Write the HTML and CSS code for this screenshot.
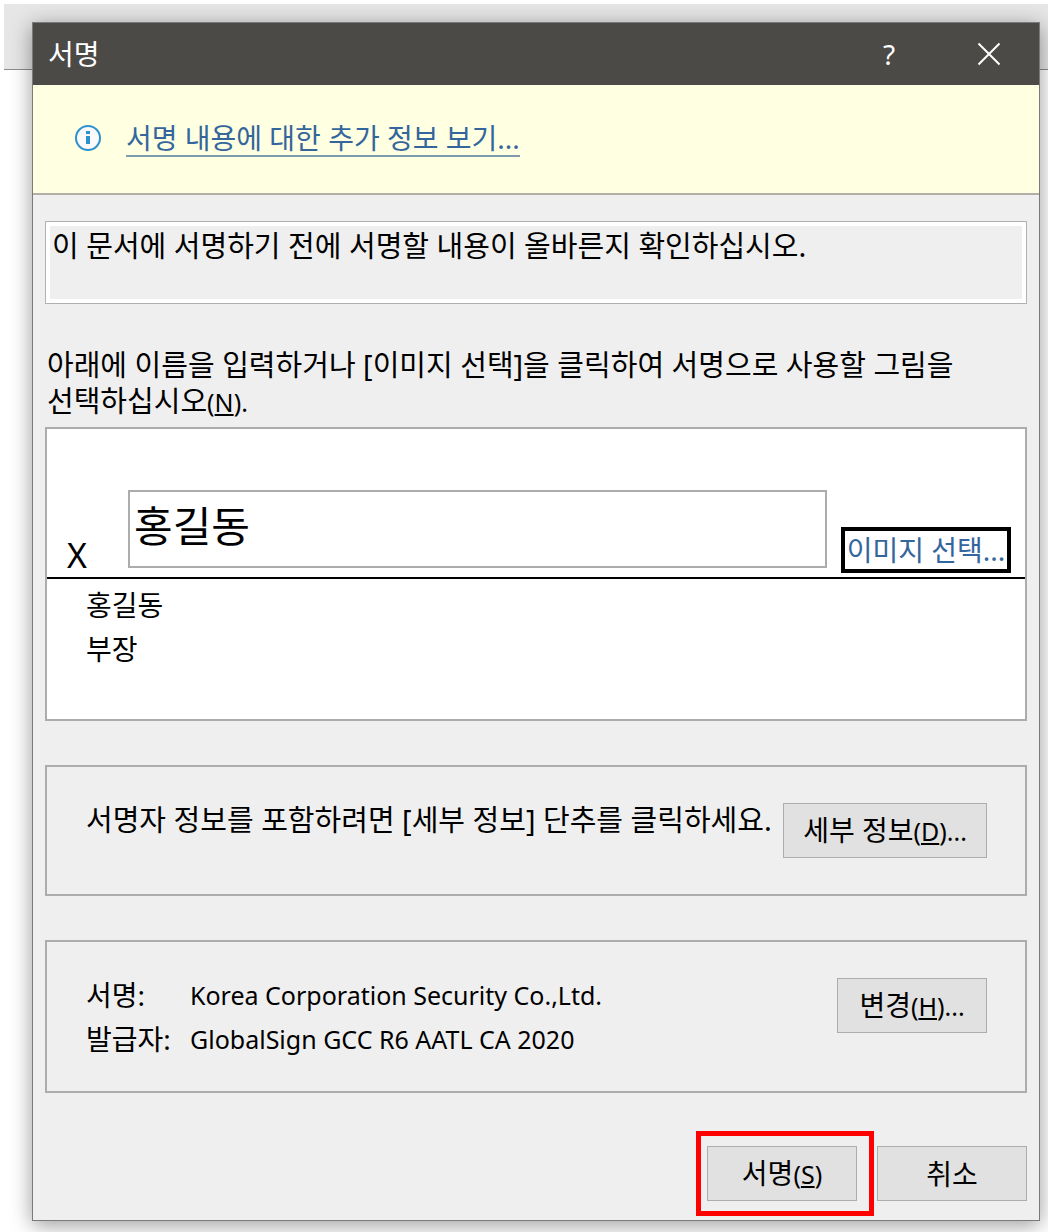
FILE: index.html
```
<!DOCTYPE html>
<html lang="ko">
<head>
<meta charset="UTF-8">
<meta name="viewport" content="width=device-width, initial-scale=1.0">
<title>서명</title>
<link rel="stylesheet" href="styles.css">
</head>
<body>

<div class="desktop">
  <div class="ribbon"></div>

  <main class="dialog">
    <!-- 제목 표시줄 -->
    <header class="titlebar">
      <h1>서명</h1>
      <button type="button" class="title-btn" aria-label="도움말">?</button>
      <button type="button" class="title-btn" aria-label="닫기">
        <svg width="24" height="24" viewBox="0 0 24 24" aria-hidden="true">
          <path d="M1.5 1.5 L22.5 22.5 M22.5 1.5 L1.5 22.5"/>
        </svg>
      </button>
    </header>

    <!-- 추가 정보 -->
    <div class="notice">
      <svg class="info-icon" width="28" height="28" viewBox="0 0 28 28" aria-hidden="true">
        <circle cx="14" cy="13" r="12"/>
        <rect x="12" y="6" width="4" height="3"/>
        <rect x="12" y="11" width="4" height="8"/>
      </svg>
      <a href="#" class="link">서명 내용에 대한 추가 정보 보기...</a>
    </div>

    <form class="content">
      <p class="message">이 문서에 서명하기 전에 서명할 내용이 올바른지 확인하십시오.</p>

      <label class="name-label" for="name">아래에 이름을 입력하거나 [이미지 선택]을 클릭하여 서명으로 사용할 그림을<br>선택하십시오<span class="key">(<u>N</u>).</span></label>

      <!-- 서명란 -->
      <div class="sign-box">
        <div class="sign-line">
          <span class="mark">X</span>
          <input type="text" id="name" value="홍길동">
          <button type="button" class="image-btn">이미지 선택...</button>
        </div>
        <div class="signer">
          <p>홍길동</p>
          <p>부장</p>
        </div>
      </div>

      <section class="panel details">
        <p>서명자 정보를 포함하려면 [세부 정보] 단추를 클릭하세요.</p>
        <button type="button" class="btn btn-wide">세부 정보<span class="key">(<u>D</u>)...</span></button>
      </section>

      <!-- 인증서 -->
      <section class="panel cert">
        <dl>
          <dt>서명:</dt>
          <dd>Korea Corporation Security Co.,Ltd.</dd>
          <dt>발급자:</dt>
          <dd>GlobalSign GCC R6 AATL CA 2020</dd>
        </dl>
        <button type="button" class="btn">변경<span class="key">(<u>H</u>)...</span></button>
      </section>

      <div class="actions">
        <div class="highlight">
          <button type="submit" class="btn">서명<span class="key">(<u>S</u>)</span></button>
        </div>
        <button type="button" class="btn">취소</button>
      </div>
    </form>
  </main>
</div>

</body>
</html>
```

FILE: styles.css
```
/* 기본 */
* {
  margin: 0;
  padding: 0;
  box-sizing: border-box;
}

body {
  font-family: "Noto Sans", "Noto Sans CJK KR", sans-serif;
  font-size: 28px;
  line-height: 36px;
  background: #fff;
  color: #000;
}

button, input {
  font: inherit;
  color: inherit;
}

/* 대화 상자 뒤의 창 */
.desktop {
  display: grid;
  min-height: 100vh;
  padding: 4px 0 0 4px;
  overflow: hidden;
}

.ribbon {
  grid-area: 1 / 1;
  height: 66px;
  background: #e6e6e6;
  border-bottom: 1px solid #8c8c8c;
}

.dialog {
  grid-area: 1 / 1;
  z-index: 1;
  display: flex;
  flex-direction: column;
  margin: 18px 8px 11px 28px;
  background: #efefef;
  border: 1px solid #7a7a7a;
  box-shadow: 0 4px 20px rgba(0,0,0,0.4);
}

/* 제목 표시줄 */
.titlebar {
  display: flex;
  align-items: center;
  height: 62px;
  padding-left: 15px;
  background: #4b4a47;
  color: #fff;
}

.titlebar h1 {
  flex: 1;
  font-size: 28px;
  font-weight: 400;
}

.title-btn {
  display: flex;
  align-items: center;
  justify-content: center;
  width: 100px;
  height: 62px;
  background: none;
  border: 0;
}

.title-btn path {
  fill: none;
  stroke: #fff;
  stroke-width: 2;
}

/* 알림 */
.notice {
  display: flex;
  align-items: center;
  gap: 24px;
  height: 110px;
  padding-left: 41px;
  background: #ffffe1;
  border-bottom: 2px solid #b0b0a6;
}

.info-icon circle {
  fill: #fafafa;
  stroke: #2b92cf;
  stroke-width: 2;
}

.info-icon rect {
  fill: #2b92cf;
}

.link {
  color: #33669c;
  line-height: 34px;
  text-decoration: none;
  border-bottom: 2px solid #7c9cae;
}

/* 본문 */
.content {
  display: flex;
  flex-direction: column;
  padding: 26px 12px 18px;
}

.message,
.name-label,
.details p {
  font-size: 29px;
}

.message {
  min-height: 83px;
  padding: 6px;
  border: 1px solid #b0b0b4;
  box-shadow: inset 0 0 0 4px #fff;
}

.name-label {
  margin: 43px 2px 7px;
}

.key {
  font-size: 25px;
}

/* 서명란 */
.sign-box {
  min-height: 294px;
  background: #fff;
  border: 2px solid #acacac;
}

.sign-line {
  display: flex;
  align-items: flex-end;
  height: 150px;
  padding: 0 14px 4px 20px;
  border-bottom: 2px solid #000;
}

.mark {
  width: 61px;
  font-size: 34px;
}

.sign-line input {
  flex: 1;
  min-width: 0;
  height: 78px;
  margin: 0 14px 5px 0;
  padding: 0 4px 12px;
  font-size: 42px;
  background: #fff;
  border: 2px solid #acacac;
  outline: 0;
}

.image-btn {
  width: 170px;
  height: 46px;
  background: #fff;
  border: 4px solid #000;
  color: #33669c;
  white-space: nowrap;
}

.signer {
  padding: 4px 39px;
  line-height: 44px;
}

/* 그룹 상자 */
.panel {
  display: flex;
  align-items: flex-start;
  justify-content: space-between;
  margin-top: 44px;
  padding: 36px 38px 30px 39px;
  border: 2px solid #acacac;
}

.details {
  min-height: 131px;
}

.details p {
  line-height: 34px;
}

.cert {
  min-height: 153px;
  padding-top: 31px;
}

.cert .btn {
  margin-top: 5px;
}

.cert dl {
  display: grid;
  grid-template-columns: 104px auto;
  line-height: 44px;
}

.cert dd {
  font-size: 25px;
}

.btn {
  width: 150px;
  height: 55px;
  background: #e1e1e1;
  border: 1px solid #adadad;
  white-space: nowrap;
}

.btn-wide {
  width: 204px;
}

/* 하단 단추 */
.actions {
  display: flex;
  justify-content: flex-end;
  gap: 20px;
  margin-top: 53px;
}

.highlight {
  position: relative;
}

.highlight::after {
  content: "";
  position: absolute;
  inset: -15px -17px -15px -11px;
  border: 5px solid #f00;
  pointer-events: none;
}
```
